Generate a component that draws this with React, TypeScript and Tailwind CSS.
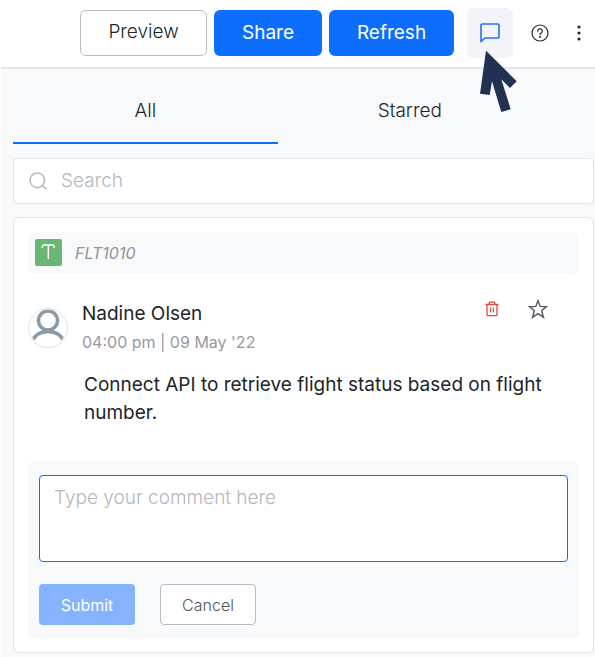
import React from "react";

function ChatIcon() {
  return (
    <svg width="20" height="20" viewBox="0 0 20 20" fill="none" stroke="#2b6cff" strokeWidth="1.6" strokeLinejoin="round" aria-hidden="true">
      <path d="M2.2 1h15.6a1.2 1.2 0 0 1 1.2 1.2v11.6a1.2 1.2 0 0 1-1.2 1.2H5L1 18.6V2.2A1.2 1.2 0 0 1 2.2 1Z" />
    </svg>
  );
}

function PointerIcon() {
  return (
    <svg className="pointer-events-none absolute left-[13px] top-[42px] z-10" width="38" height="64" viewBox="0 0 38 64" aria-hidden="true">
      <path d="M6 0.7 36.7 31.3 30 38 21.3 29.3 30.7 59.3 21.3 62 12 31.3 9.7 45 0 43.7Z" fill="#203154" />
    </svg>
  );
}

function HelpIcon() {
  return (
    <svg width="18" height="18" viewBox="0 0 18 18" fill="none" stroke="#212529" strokeWidth="1.2" strokeLinecap="round" aria-hidden="true">
      <circle cx="9" cy="9" r="8" />
      <path d="M6.7 7.2a2.3 2.2 0 1 1 3.5 1.7C9.4 9.4 9 9.8 9 10.7" />
      <circle cx="9" cy="13" r="0.4" fill="#212529" />
    </svg>
  );
}

function DotsIcon() {
  return (
    <svg width="4" height="16" viewBox="0 0 4 16" fill="#212529" aria-hidden="true">
      <circle cx="2" cy="2" r="1.6" />
      <circle cx="2" cy="8" r="1.6" />
      <circle cx="2" cy="14" r="1.6" />
    </svg>
  );
}

function SearchIcon() {
  return (
    <svg width="18" height="18" viewBox="0 0 18 18" fill="none" stroke="#b9bcc2" strokeWidth="1.6" strokeLinecap="round" aria-hidden="true">
      <circle cx="8.3" cy="8.3" r="7.3" />
      <path d="M13.6 13.6 17 17" />
    </svg>
  );
}

function TextFieldIcon() {
  return (
    <svg className="rounded-xs" width="27" height="27" viewBox="0 0 27 27" fill="none" aria-hidden="true">
      <rect width="27" height="27" fill="#6ab775" />
      <path d="M7.3 9V7.8a1.8 1.8 0 0 1 1.800-1.800h8.300a1.800 1.800 0 0 1 1.800 1.800V9M13.3 6v14" stroke="#fff" strokeWidth="1.4" />
    </svg>
  );
}

function Avatar() {
  return (
    <svg className="shrink-0" width="40" height="40" viewBox="0 0 40 40" fill="none" aria-hidden="true">
      <defs>
        <clipPath id="avatar-clip">
          <circle cx="20" cy="20" r="18.5" />
        </clipPath>
      </defs>
      <circle cx="20" cy="20" r="19.5" fill="#fff" stroke="#dfe1e4" />
      <g clipPath="url(#avatar-clip)" stroke="#8a99a6" strokeWidth="3.4">
        <circle cx="20" cy="12.5" r="9.5" />
        <path d="M3.5 35C6 28 12 23.500 20 23.500s14 4.500 16.500 11.500" />
      </g>
    </svg>
  );
}

function TrashIcon() {
  return (
    <svg width="14" height="16" viewBox="0 0 14 16" fill="none" stroke="#dc4a45" strokeWidth="1.3" aria-hidden="true">
      <path d="M0.5 3.5h13M4.200 3.500V1.900a.7.7 0 0 1 .7-.7h4.200a.7.7 0 0 1 .7.7v1.600M2 3.500v10.200a1 1 0 0 0 1 1h8a1 1 0 0 0 1-1V3.500M5.600 6.500v5M8.400 6.500v5" />
    </svg>
  );
}

function StarIcon() {
  return (
    <svg width="20" height="20" viewBox="0 0 20 20" fill="none" stroke="#575c62" strokeWidth="1.5" strokeLinejoin="miter" aria-hidden="true">
      <path d="M10 1.800 12.200 7.400 18.200 7.700 13.600 11.700 15.400 18.300 10 14.700 4.600 18.300 6.400 11.700 1.800 7.700 7.800 7.400Z" />
    </svg>
  );
}

export default function App() {
  return (
    <div className="min-h-screen bg-white pl-px font-['Inter',sans-serif] text-[19px] font-normal text-[#212529]">
      <header className="flex items-center justify-end border-b-2 border-[#e2e4e5] pb-[9px] pr-[13px] pt-2">
        <div className="flex gap-[7px]">
          <button className="h-[46px] w-[127px] rounded-md border border-[#b9bcc2] bg-white pb-px font-light">Preview</button>
          <button className="h-[46px] w-[108px] rounded-md bg-[#0d6efd] pt-px text-white">Share</button>
          <button className="h-[46px] w-[125px] rounded-md bg-[#0d6efd] pt-px text-white">Refresh</button>
        </div>
        <div className="relative ml-[13px]">
          <button aria-label="Comments" className="flex h-[50px] w-[46px] items-center justify-center rounded-md bg-[#f3f4f9] pb-px">
            <ChatIcon />
          </button>
          <PointerIcon />
        </div>
        <button aria-label="Help" className="ml-[18px]">
          <HelpIcon />
        </button>
        <button aria-label="More options" className="ml-[27px] px-px">
          <DotsIcon />
        </button>
      </header>

      <main className="bg-[#f8f9fb] pb-1 pl-3 pr-px pt-2">
        <div role="tablist" className="mr-[52px] grid grid-cols-2">
          <button role="tab" aria-selected="true" className="h-[67px] border-b-2 border-[#0d6efd] pt-1 font-light">All</button>
          <button role="tab" aria-selected="false" className="h-[67px] border-b-2 border-transparent pt-1 font-light">Starred</button>
        </div>

        <label className="mt-[14px] flex h-[46px] items-center gap-[14px] rounded-sm border border-[#e2e4e5] bg-white pl-[15px] pr-3">
          <SearchIcon />
          <input
            type="search"
            aria-label="Search"
            placeholder="Search"
            className="min-w-0 flex-1 bg-transparent pt-px font-light outline-none placeholder:text-[#b4b7bc]"
          />
        </label>

        <article className="mt-[13px] rounded-md border border-[#e2e4e5] bg-white p-[14px]">
          <div className="flex h-[41px] items-center gap-[13px] rounded-md bg-[#f8f9fb] px-[7px]">
            <TextFieldIcon />
            <span className="text-base italic text-[#919398]">FLT1010</span>
          </div>

          <div className="mt-[26px] flex items-center gap-[14px]">
            <Avatar />
            <div className="flex-1">
              <h2 className="leading-[29px]">Nadine Olsen</h2>
              <p className="text-base leading-[28px] text-[#97999e]">04:00 pm | 09 May '22</p>
            </div>
            <div className="mr-[31px] flex items-center gap-[29px] self-start">
              <button aria-label="Delete comment">
                <TrashIcon />
              </button>
              <button aria-label="Star comment">
                <StarIcon />
              </button>
            </div>
          </div>

          <p className="mt-[15px] pl-[56px] pr-[30px] leading-[28px]">
            Connect API to retrieve flight status based on flight number.
          </p>

          <form className="mt-[34px] rounded-md bg-[#f8f9fb] px-[11px] pb-[13px] pt-[14px]" onSubmit={(e) => e.preventDefault()}>
            <textarea
              aria-label="Comment"
              placeholder="Type your comment here"
              className="block h-[87px] w-full resize-none rounded-sm border border-[#0d6efd] bg-white px-[14px] py-2 leading-[28px] font-light outline-none placeholder:text-[#b4b7bc]"
            />
            <div className="mt-[22px] flex gap-[25px] text-base">
              <button type="submit" className="h-[41px] w-24 rounded-sm bg-[#86b3fd] text-white">Submit</button>
              <button type="button" className="h-[41px] w-24 rounded-sm border border-[#b9bcc2] bg-white font-light text-[#50545a]">Cancel</button>
            </div>
          </form>
        </article>
      </main>
    </div>
  );
}
